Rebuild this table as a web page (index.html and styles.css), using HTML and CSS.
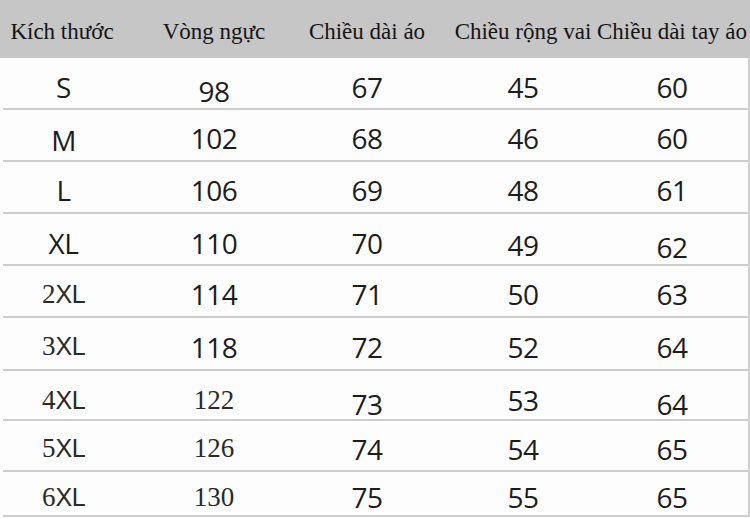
FILE: index.html
```html
<!DOCTYPE html>
<html lang="vi">
<head>
<meta charset="utf-8">
<title>Bảng kích thước</title>
<link rel="stylesheet" href="styles.css">
</head>
<body>
<div class="chart">
  <div class="head">
    <div class="hc">Kích thước</div>
    <div class="hc">Vòng ngực</div>
    <div class="hc">Chiều dài áo</div>
    <div class="hc">Chiều rộng vai</div>
    <div class="hc">Chiều dài tay áo</div>
  </div>
  <div class="rows">
    <div class="row"><div class="c">S</div><div class="c low">98</div><div class="c">67</div><div class="c">45</div><div class="c">60</div></div>
    <div class="row"><div class="c lower">M</div><div class="c">102</div><div class="c">68</div><div class="c">46</div><div class="c">60</div></div>
    <div class="row"><div class="c">L</div><div class="c">106</div><div class="c">69</div><div class="c">48</div><div class="c">61</div></div>
    <div class="row"><div class="c">XL</div><div class="c">110</div><div class="c">70</div><div class="c lower">49</div><div class="c low">62</div></div>
    <div class="row"><div class="c mix"><span class="d">2</span>XL</div><div class="c">114</div><div class="c">71</div><div class="c">50</div><div class="c">63</div></div>
    <div class="row"><div class="c mix"><span class="d">3</span>XL</div><div class="c">118</div><div class="c">72</div><div class="c">52</div><div class="c">64</div></div>
    <div class="row"><div class="c mix"><span class="d">4</span>XL</div><div class="c serif">122</div><div class="c low">73</div><div class="c">53</div><div class="c low">64</div></div>
    <div class="row"><div class="c mix"><span class="d">5</span>XL</div><div class="c serif">126</div><div class="c">74</div><div class="c">54</div><div class="c">65</div></div>
    <div class="row"><div class="c mix"><span class="d">6</span>XL</div><div class="c serif">130</div><div class="c">75</div><div class="c">55</div><div class="c">65</div></div>
  </div>
</div>
</body>
</html>
```
FILE: styles.css
```css
html, body {
  margin: 0;
  padding: 0;
  background: #fdfdfd;
}

.chart {
  width: 750px;
  height: 519px;
  overflow: hidden;
}

.head {
  display: grid;
  grid-template-columns: 124px 180px 126px 186px 112px 1fr;
  height: 58px;
  background: #c6c6c6;
  font-family: "Liberation Serif", "Times New Roman", serif;
  font-size: 23px;
  color: #141414;
}

.hc {
  display: flex;
  align-items: center;
  justify-content: center;
  white-space: nowrap;
  padding-top: 6px;
}

.rows {
  border-right: 2px solid #cfcfcf;
  padding-left: 3px;
}

.row {
  display: grid;
  grid-template-columns: 121px 180px 126px 186px 112px 1fr;
  height: 50px;
  border-bottom: 2px solid #cdcdcd;
  font-family: "Open Sans", "Noto Sans", sans-serif;
  font-size: 28px;
  letter-spacing: -0.5px;
  color: #1c1c1c;
}

.row:nth-child(6) { height: 51px; }
.row:nth-child(7) { height: 48px; }
.row:nth-child(8) { height: 49px; }
.row:nth-child(9) { height: 43px; }

.c {
  display: flex;
  align-items: center;
  justify-content: center;
  white-space: nowrap;
  padding-top: 6px;
}

.c.lower {
  padding-top: 10px;
}

.c.low {
  padding-top: 14px;
}

.c.serif {
  font-family: "Liberation Serif", "Times New Roman", serif;
  font-size: 27px;
  letter-spacing: 0;
  color: #2a2a2a;
}

.c.mix {
  font-family: "Liberation Sans", Arial, sans-serif;
  font-size: 25px;
  letter-spacing: -0.5px;
  color: #2a2a2a;
}

.d {
  font-family: "Liberation Serif", "Times New Roman", serif;
  font-size: 27px;
  letter-spacing: 0;
}
```
